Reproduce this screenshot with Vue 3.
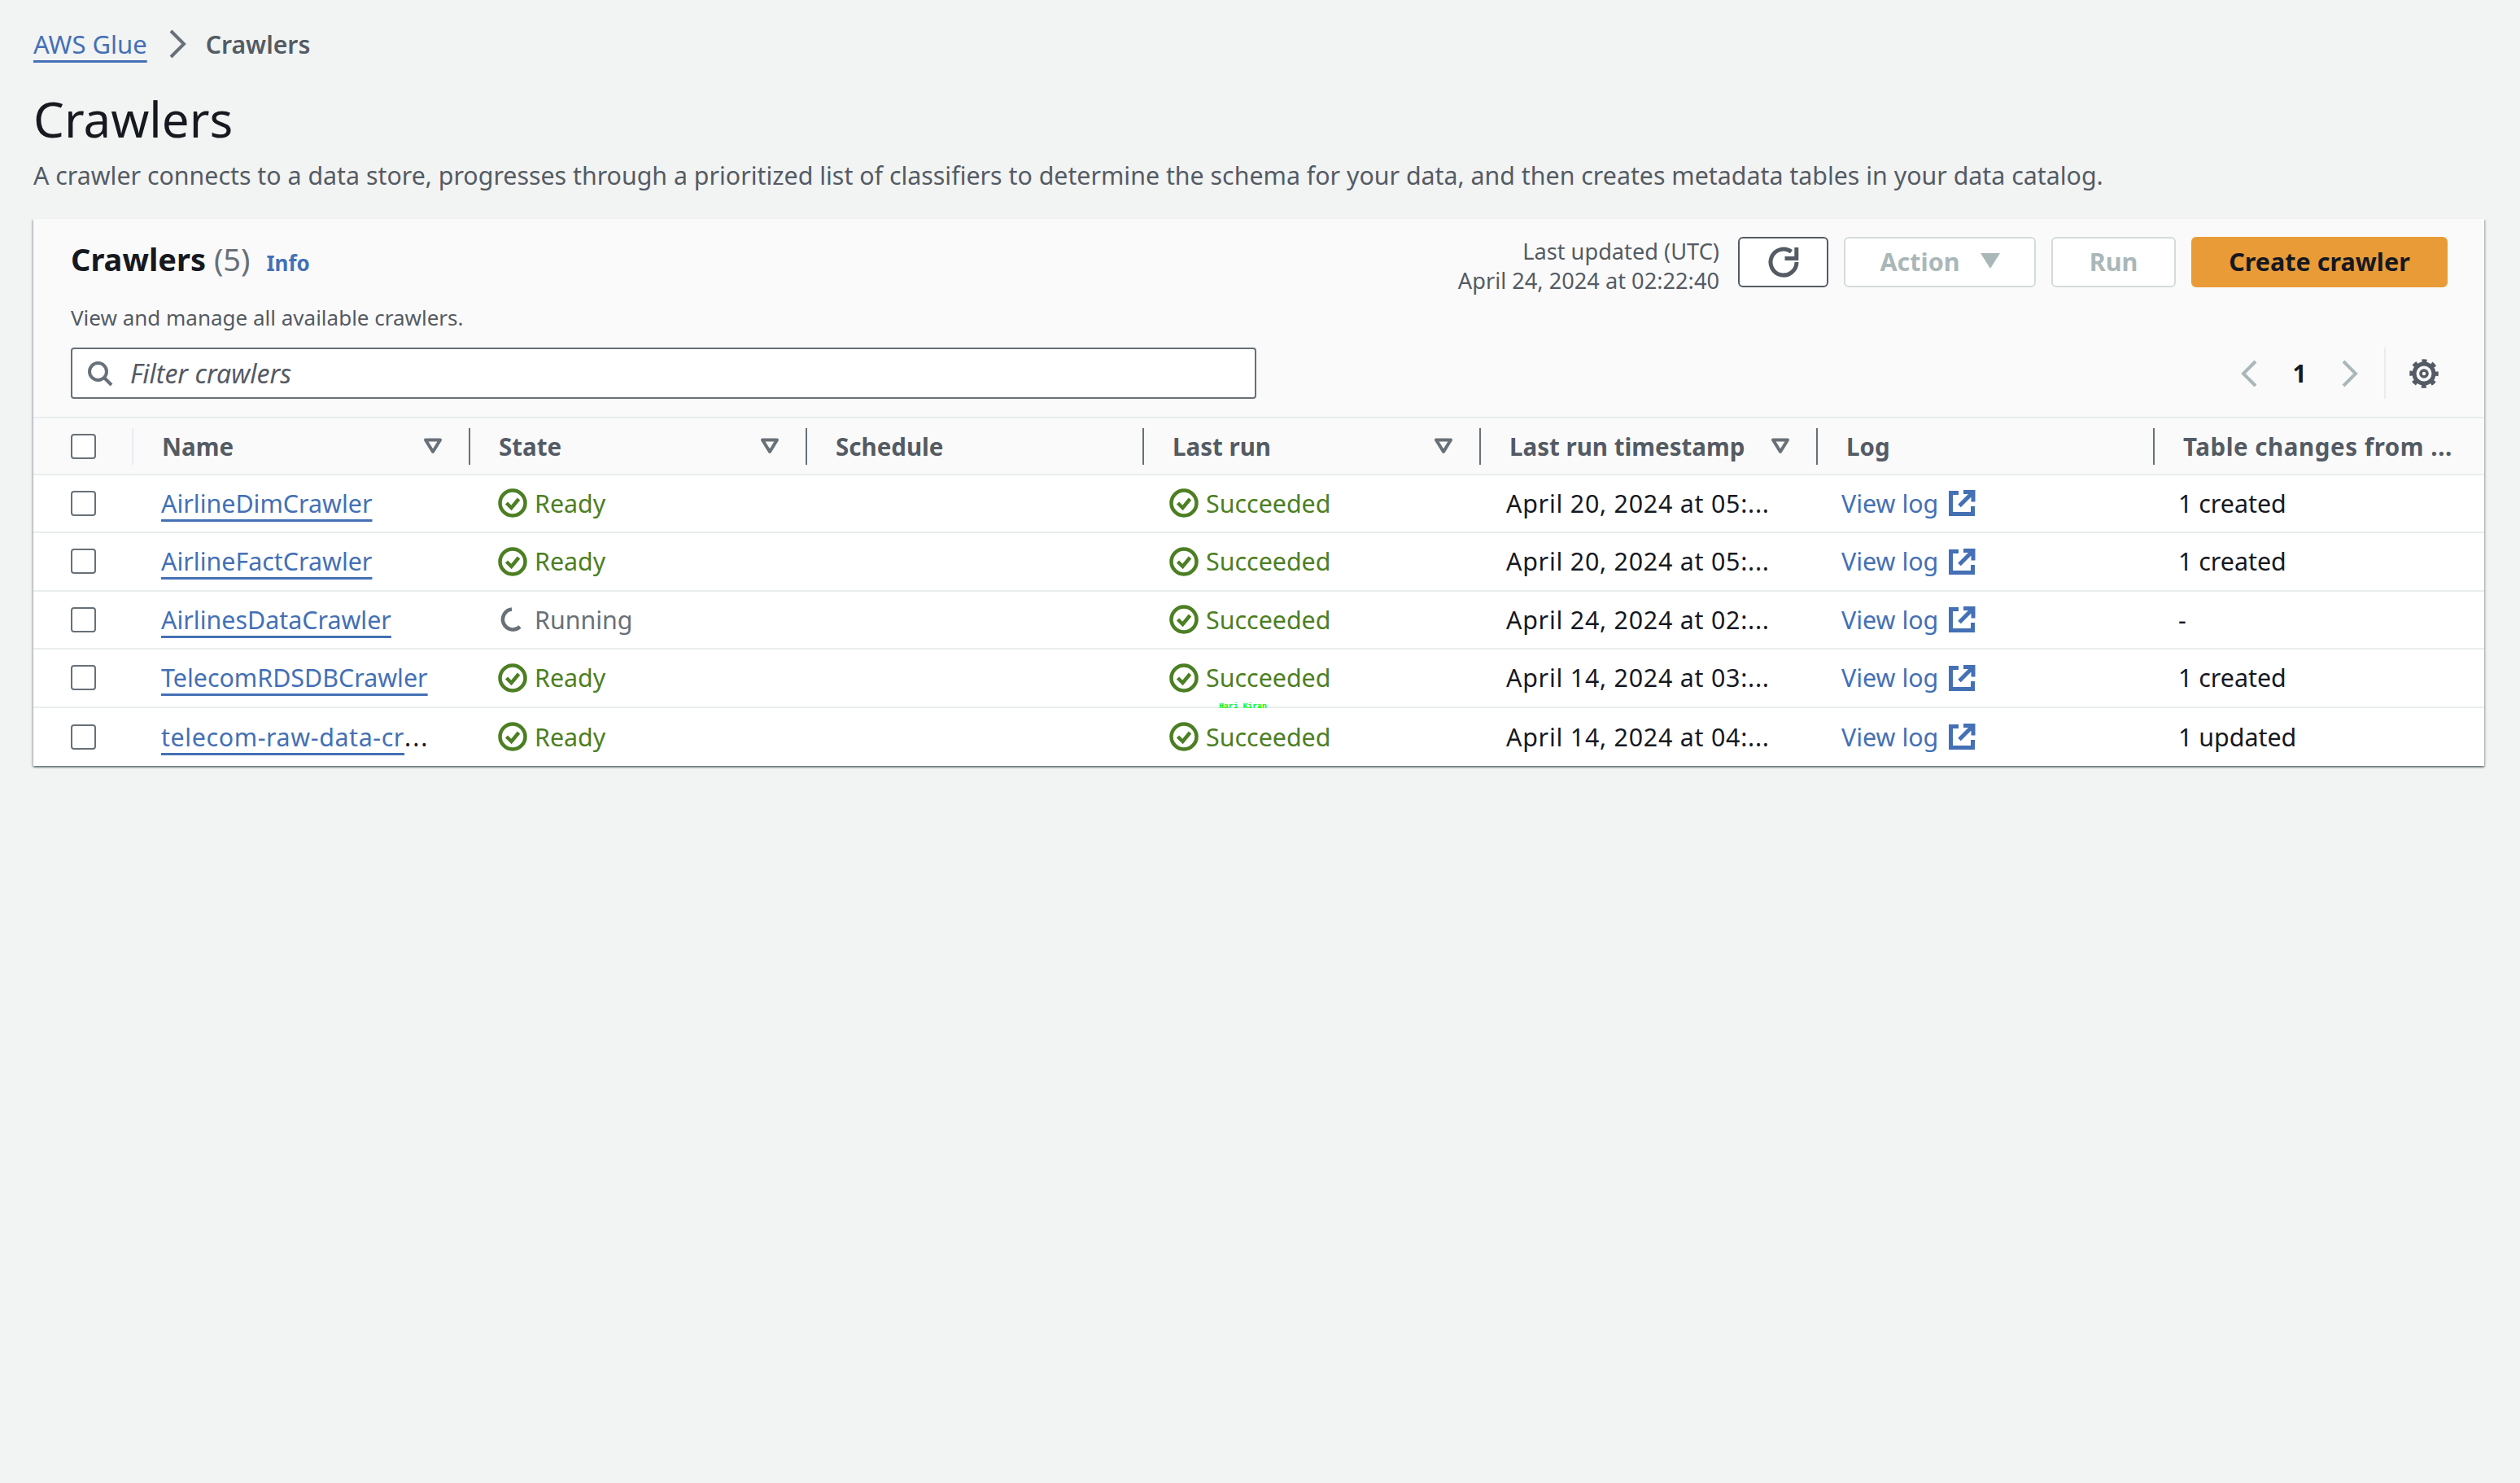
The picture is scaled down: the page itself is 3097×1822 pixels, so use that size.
<template>
  <div class="page">
    <nav class="crumbs">
      <a class="link crumb-link">AWS Glue</a>
      <svg class="crumb-sep" viewBox="0 0 24 36" fill="none"><path d="M3 2l16 16L3 34" stroke="#687078" stroke-width="4"/></svg>
      <span class="crumb-cur">Crawlers</span>
    </nav>
    <h1>Crawlers</h1>
    <p class="desc">A crawler connects to a data store, progresses through a prioritized list of classifiers to determine the schema for your data, and then creates metadata tables in your data catalog.</p>

    <section class="card">
      <header class="card-head">
        <div class="head-top">
          <div class="title-wrap">
            <h2>Crawlers <span class="count">(5)</span></h2>
            <a class="info">Info</a>
          </div>
          <div class="actions">
            <div class="updated">Last updated (UTC)<br />April 24, 2024 at 02:22:40</div>
            <button class="btn btn-refresh">
              <svg viewBox="0 0 38 38" width="38" height="38" fill="none">
                <path d="M35 19A16 16 0 1 1 28.500 6.200" stroke="#545b64" stroke-width="5" />
                <path d="M34.800 1v13.500H20.500" stroke="#545b64" stroke-width="5" />
              </svg>
            </button>
            <button class="btn btn-off btn-action">Action <span class="caret"></span></button>
            <button class="btn btn-off btn-run">Run</button>
            <button class="btn btn-create">Create crawler</button>
          </div>
        </div>
        <div class="sub">View and manage all available crawlers.</div>
        <div class="tools">
          <div class="filter">
            <svg viewBox="0 0 32 32" width="32" height="32" fill="none">
              <circle cx="13.5" cy="13.5" r="10.5" stroke="#687078" stroke-width="4" />
              <path d="M21 21l9 9" stroke="#687078" stroke-width="4" />
            </svg>
            <span>Filter crawlers</span>
          </div>
          <div class="pager">
            <svg class="chev" viewBox="0 0 24 36" fill="none"><path d="M19 3L4 18l15 15" stroke="#aab7b8" stroke-width="4" /></svg>
            <span class="page-no">1</span>
            <svg class="chev" viewBox="0 0 24 36" fill="none"><path d="M5 3l15 15L5 33" stroke="#aab7b8" stroke-width="4" /></svg>
            <span class="pager-sep"></span>
            <svg class="gear" viewBox="0 0 36 36" fill="none" stroke="#545b64">
              <circle cx="18" cy="18" r="12" stroke-width="5" />
              <circle cx="18" cy="18" r="15.500" stroke-width="4.500" stroke-dasharray="6 6.170" stroke-dashoffset="3" />
              <circle cx="18" cy="18" r="4" stroke-width="3.600" />
            </svg>
          </div>
        </div>
      </header>

      <table class="grid">
        <colgroup>
          <col class="c-check" />
          <col v-for="n in 6" :key="n" class="c-data" />
          <col />
        </colgroup>
        <thead>
          <tr>
            <th class="cell-check"><span class="check"></span></th>
            <th v-for="(col, i) in columns" :key="col.label" :class="{ 'first-col': i === 0, 'last-col': i === columns.length - 1 }">
              <div class="th-in">
                <span class="th-label">{{ col.label }}</span>
                <svg v-if="col.sort" class="sort" viewBox="0 0 24 20" fill="none">
                  <path d="M3 2.500h18L12 17z" stroke="#687078" stroke-width="4" stroke-linejoin="round" />
                </svg>
              </div>
            </th>
          </tr>
        </thead>
        <tbody>
          <tr v-for="row in rows" :key="row.name">
            <td class="cell-check"><span class="check"></span></td>
            <td class="td-name"><a class="link name-link" :class="{ 'cut-link': row.cut }">{{ row.name }}</a><span v-if="row.cut" class="dots">...</span></td>
            <td class="td-state">
              <span v-if="row.state === 'Ready'" class="status ok">
                <svg class="st-icon" viewBox="0 0 36 36" fill="none">
                  <circle cx="18" cy="18" r="15.500" stroke="#4c7f23" stroke-width="4.500" />
                  <path d="M10.500 18l6 6 9-11" stroke="#4c7f23" stroke-width="4.500" />
                </svg>
                Ready
              </span>
              <span v-else class="status run">
                <svg class="st-icon" viewBox="0 0 36 36" fill="none">
                  <path d="M17 5.500A12.500 12.500 0 1 0 27 27" stroke="#687078" stroke-width="4.500" />
                </svg>
                Running
              </span>
            </td>
            <td></td>
            <td class="td-run">
              <span class="status ok">
                <svg class="st-icon" viewBox="0 0 36 36" fill="none">
                  <circle cx="18" cy="18" r="15.500" stroke="#4c7f23" stroke-width="4.500" />
                  <path d="M10.500 18l6 6 9-11" stroke="#4c7f23" stroke-width="4.500" />
                </svg>
                Succeeded
              </span>
            </td>
            <td class="td-shift td-time">{{ row.time }}</td>
            <td class="td-end">
              <a class="log">View log
                <svg class="ext" viewBox="0 0 34 34" fill="none" stroke="#4470b5" stroke-width="5">
                  <path d="M13 4.500H3.500v26h27V21" />
                  <path d="M19 3.500h12v12M31 3.500L14 20.500" />
                </svg>
              </a>
            </td>
            <td class="td-end">{{ row.changes }}</td>
          </tr>
        </tbody>
      </table>
      <span class="mark">Hari Kiran</span>
    </section>
  </div>
</template>

<script setup>
const columns = [
  { label: 'Name', sort: true },
  { label: 'State', sort: true },
  { label: 'Schedule', sort: false },
  { label: 'Last run', sort: true },
  { label: 'Last run timestamp', sort: true },
  { label: 'Log', sort: false },
  { label: 'Table changes from ...', sort: false }
]

const rows = [
  { name: 'AirlineDimCrawler', state: 'Ready', time: 'April 20, 2024 at 05:...', changes: '1 created' },
  { name: 'AirlineFactCrawler', state: 'Ready', time: 'April 20, 2024 at 05:...', changes: '1 created' },
  { name: 'AirlinesDataCrawler', state: 'Running', time: 'April 24, 2024 at 02:...', changes: '-' },
  { name: 'TelecomRDSDBCrawler', state: 'Ready', time: 'April 14, 2024 at 03:...', changes: '1 created' },
  { name: 'telecom-raw-data-cr', cut: true, state: 'Ready', time: 'April 14, 2024 at 04:...', changes: '1 updated' }
]
</script>

<style>
html, body {
  margin: 0;
  background: #f2f3f3;
}
</style>

<style scoped>
.page {
  min-height: 1822px;
  box-sizing: border-box;
  padding: 32px 44px 0 41px;
  background: #f2f3f3;
  color: #16191f;
  font-family: "Noto Sans", "Open Sans", sans-serif;
  font-size: 30.4px;
}

.link {
  color: #4470b5;
  text-decoration: underline;
  text-decoration-thickness: 2.5px;
  text-decoration-skip-ink: none;
  text-underline-offset: 8px;
}

.crumbs {
  display: flex;
  align-items: center;
  height: 44px;
  font-size: 30.2px;
}

.crumb-link {
  font-size: 31px;
}

.crumb-sep {
  width: 24px;
  height: 36px;
  margin: 0 22px 0 26px;
}

.crumb-cur {
  color: #545b64;
  font-weight: 600;
}

h1 {
  margin: 32px 0 0;
  font-size: 60px;
  font-weight: 400;
  line-height: 76px;
}

.desc {
  margin: 10px 0 0;
  color: #545b64;
  font-size: 30.33px;
  line-height: 44px;
}

.card {
  position: relative;
  margin-top: 31px;
  background: #fff;
  box-shadow: 0 2px 2px 0 rgba(0, 28, 36, 0.45), 2px 1px 2px 0 rgba(0, 28, 36, 0.15), -2px 1px 2px 0 rgba(0, 28, 36, 0.15);
}

.card-head {
  height: 243px;
  box-sizing: border-box;
  padding: 22px 45px 0 46px;
  background: #fafafa;
}

.head-top {
  display: flex;
  justify-content: space-between;
  align-items: flex-start;
}

.title-wrap {
  display: flex;
  align-items: baseline;
  gap: 20px;
  padding-top: 2px;
}

h2 {
  margin: 0;
  font-size: 38px;
  font-weight: 700;
  line-height: 50px;
}

.count {
  color: #687078;
  font-weight: 400;
}

.info {
  color: #4470b5;
  font-size: 26px;
  font-weight: 700;
}

.actions {
  display: flex;
  align-items: flex-start;
  gap: 19px;
}

.updated {
  margin: 0 4px 0 0;
  color: #545b64;
  font-size: 27.2px;
  line-height: 36px;
  text-align: right;
}

.btn {
  height: 62px;
  box-sizing: border-box;
  padding: 0 0 3px;
  border: 2px solid #d5dbdb;
  border-radius: 6px;
  background: #fff;
  font-family: inherit;
  font-size: 30.5px;
  font-weight: 700;
}

.btn-refresh {
  display: flex;
  align-items: center;
  justify-content: center;
  width: 111px;
  padding: 0;
  border-color: #545b64;
}

.btn-off {
  color: #aab7b8;
}

.btn-action {
  display: flex;
  align-items: center;
  justify-content: center;
  gap: 25px;
  width: 236px;
}

.caret {
  width: 0;
  height: 0;
  border-top: 19px solid #aab7b8;
  border-left: 12px solid transparent;
  border-right: 12px solid transparent;
}

.btn-run {
  width: 153px;
}

.btn-create {
  width: 315px;
  border-color: #e89b37;
  background: #e89b37;
  color: #16191f;
}

.sub {
  margin-top: 9px;
  color: #545b64;
  font-size: 26px;
  line-height: 36px;
}

.tools {
  display: flex;
  justify-content: space-between;
  align-items: center;
  margin-top: 19px;
}

.filter {
  display: flex;
  align-items: center;
  gap: 21px;
  width: 1457px;
  height: 63px;
  box-sizing: border-box;
  padding-left: 18px;
  border: 2px solid #687078;
  border-radius: 4px;
  background: #fff;
  color: #545b64;
  font-size: 32px;
  font-style: italic;
}

.pager {
  display: flex;
  align-items: center;
  height: 63px;
  margin-right: 11px;
}

.chev {
  width: 24px;
  height: 36px;
}

.page-no {
  width: 98px;
  font-size: 30px;
  font-weight: 700;
  text-align: center;
}

.pager-sep {
  width: 2px;
  height: 63px;
  margin: 0 29px 0 31px;
  background: #eaeded;
}

.gear {
  width: 36px;
  height: 36px;
}

.grid {
  width: 100%;
  table-layout: fixed;
  border-collapse: collapse;
}

.c-check {
  width: 121px;
}

.c-data {
  width: 414px;
}

th {
  height: 70px;
  box-sizing: border-box;
  padding: 0;
  border-top: 2px solid #eaeded;
  border-bottom: 2px solid #eaeded;
  background: #fafafa;
  color: #545b64;
  font-size: 29.5px;
  font-weight: 700;
  text-align: left;
}

.th-in {
  display: flex;
  align-items: center;
  justify-content: space-between;
  height: 45px;
  box-sizing: border-box;
  padding: 0 32px 0 35px;
  border-left: 2px solid #687078;
  white-space: nowrap;
}

.first-col .th-in {
  border-left-color: #eaeded;
}

.last-col .th-label {
  letter-spacing: 0.55px;
}

.sort {
  width: 24px;
  height: 20px;
  flex: none;
}

td {
  height: 72px;
  box-sizing: border-box;
  padding: 0 0 1px;
  border-bottom: 2px solid #eaeded;
  white-space: nowrap;
}

tbody tr:nth-child(odd) td {
  height: 71px;
}

tbody tr:last-child td {
  height: 72px;
  border-bottom: 0;
}

.cell-check {
  padding-left: 46px;
}

.check {
  display: block;
  width: 31px;
  height: 31px;
  box-sizing: border-box;
  border: 2px solid #687078;
  border-radius: 4px;
  background: #fff;
}

.td-name {
  padding-left: 36px;
}

.cut-link {
  letter-spacing: 0.6px;
}

.dots {
  letter-spacing: 2px;
}

.td-state {
  padding-left: 36px;
}

.td-run {
  padding-left: 33px;
}

.td-shift {
  padding-left: 33px;
}

.td-end {
  padding-left: 31px;
}

.td-time {
  letter-spacing: 0.75px;
}

.status {
  display: flex;
  align-items: center;
  gap: 9px;
}

.ok {
  color: #4c7f23;
}

.run {
  color: #687078;
}

.st-icon {
  width: 36px;
  height: 36px;
  flex: none;
}

.log {
  display: flex;
  align-items: center;
  gap: 12px;
  color: #4470b5;
}

.ext {
  width: 34px;
  height: 34px;
}

.mark {
  position: absolute;
  left: 1457px;
  top: 594px;
  color: #00ff00;
  font-family: "Liberation Mono", monospace;
  font-size: 9.800px;
  font-weight: 700;
  line-height: 10px;
}
</style>
